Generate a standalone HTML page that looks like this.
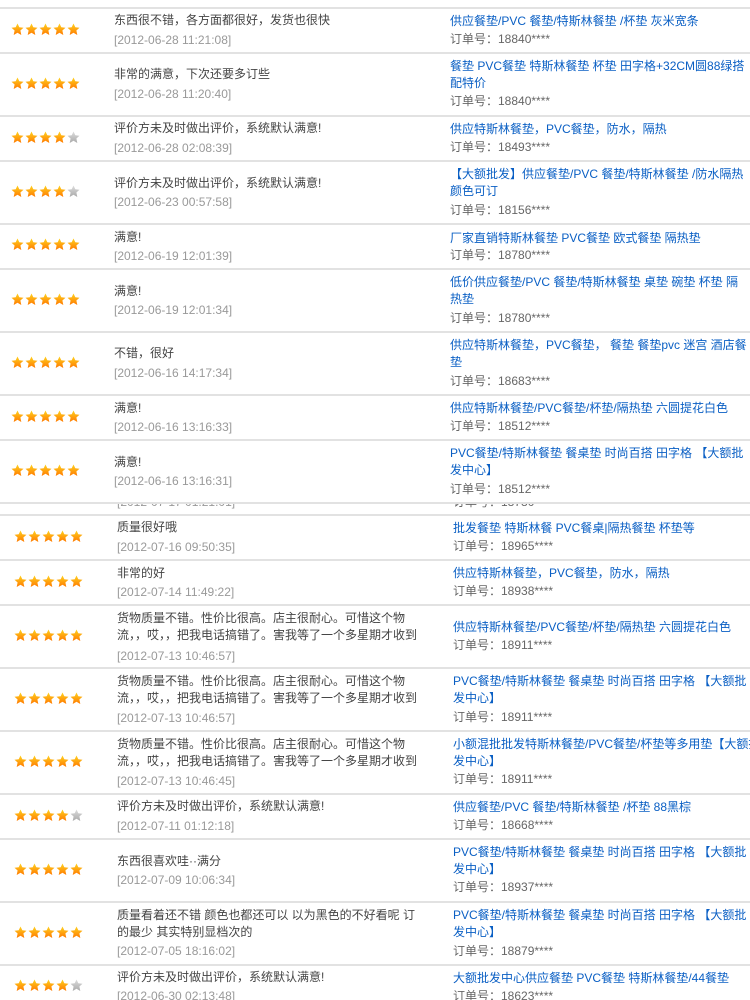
<!DOCTYPE html>
<html><head><meta charset="utf-8">
<style>
html,body{margin:0;padding:0;background:#fff;width:750px;height:1000px;overflow:hidden;position:relative;}
.t{position:absolute;font-family:"Liberation Sans","Noto Sans CJK SC",sans-serif;font-size:12px;line-height:16px;white-space:nowrap;}
.c{color:#444;}
.d{color:#999;}
.p{color:#0a5fc4;}
.o{color:#666;}
.l{position:absolute;left:0;width:750px;height:2px;background:#e2e2e2;}
.s{position:absolute;height:13px;}
</style></head><body>
<svg width="0" height="0" style="position:absolute">
<defs>
<linearGradient id="g" x1="0" y1="0" x2="0" y2="1"><stop offset="0" stop-color="#ffd21f"/><stop offset="1" stop-color="#ff7a00"/></linearGradient>
<linearGradient id="h" x1="0" y1="0" x2="0" y2="1"><stop offset="0" stop-color="#ddd"/><stop offset="1" stop-color="#aaa"/></linearGradient>
<symbol id="st" viewBox="0 0 13 13"><path d="M6.5 0.5 L8.3 4.3 L12.5 4.7 L9.4 7.5 L10.3 12 L6.5 9.8 L2.7 12 L3.6 7.5 L0.5 4.7 L4.7 4.3 Z"/></symbol>
</defs></svg>

<!-- lines top -->
<div class="l" style="top:7px"></div>
<div class="l" style="top:52px"></div>
<div class="l" style="top:115px"></div>
<div class="l" style="top:160px"></div>
<div class="l" style="top:223px"></div>
<div class="l" style="top:268px"></div>
<div class="l" style="top:331px"></div>
<div class="l" style="top:394px"></div>
<div class="l" style="top:439px"></div>
<div class="l" style="top:502px"></div>
<div class="l" style="top:514px"></div>
<div class="l" style="top:559px"></div>
<div class="l" style="top:604px"></div>
<div class="l" style="top:667px"></div>
<div class="l" style="top:730px"></div>
<div class="l" style="top:793px"></div>
<div class="l" style="top:838px"></div>
<div class="l" style="top:901px"></div>
<div class="l" style="top:964px"></div>

<!-- stars -->
<svg class="s" style="left:11px;top:23px" width="72" height="13"><use href="#st" x="0" width="13" height="13" fill="url(#g)"/><use href="#st" x="14" width="13" height="13" fill="url(#g)"/><use href="#st" x="28" width="13" height="13" fill="url(#g)"/><use href="#st" x="42" width="13" height="13" fill="url(#g)"/><use href="#st" x="56" width="13" height="13" fill="url(#g)"/></svg>
<svg class="s" style="left:11px;top:77px" width="72" height="13"><use href="#st" x="0" width="13" height="13" fill="url(#g)"/><use href="#st" x="14" width="13" height="13" fill="url(#g)"/><use href="#st" x="28" width="13" height="13" fill="url(#g)"/><use href="#st" x="42" width="13" height="13" fill="url(#g)"/><use href="#st" x="56" width="13" height="13" fill="url(#g)"/></svg>
<svg class="s" style="left:11px;top:131px" width="72" height="13"><use href="#st" x="0" width="13" height="13" fill="url(#g)"/><use href="#st" x="14" width="13" height="13" fill="url(#g)"/><use href="#st" x="28" width="13" height="13" fill="url(#g)"/><use href="#st" x="42" width="13" height="13" fill="url(#g)"/><use href="#st" x="56" width="13" height="13" fill="url(#h)"/></svg>
<svg class="s" style="left:11px;top:185px" width="72" height="13"><use href="#st" x="0" width="13" height="13" fill="url(#g)"/><use href="#st" x="14" width="13" height="13" fill="url(#g)"/><use href="#st" x="28" width="13" height="13" fill="url(#g)"/><use href="#st" x="42" width="13" height="13" fill="url(#g)"/><use href="#st" x="56" width="13" height="13" fill="url(#h)"/></svg>
<svg class="s" style="left:11px;top:238px" width="72" height="13"><use href="#st" x="0" width="13" height="13" fill="url(#g)"/><use href="#st" x="14" width="13" height="13" fill="url(#g)"/><use href="#st" x="28" width="13" height="13" fill="url(#g)"/><use href="#st" x="42" width="13" height="13" fill="url(#g)"/><use href="#st" x="56" width="13" height="13" fill="url(#g)"/></svg>
<svg class="s" style="left:11px;top:293px" width="72" height="13"><use href="#st" x="0" width="13" height="13" fill="url(#g)"/><use href="#st" x="14" width="13" height="13" fill="url(#g)"/><use href="#st" x="28" width="13" height="13" fill="url(#g)"/><use href="#st" x="42" width="13" height="13" fill="url(#g)"/><use href="#st" x="56" width="13" height="13" fill="url(#g)"/></svg>
<svg class="s" style="left:11px;top:356px" width="72" height="13"><use href="#st" x="0" width="13" height="13" fill="url(#g)"/><use href="#st" x="14" width="13" height="13" fill="url(#g)"/><use href="#st" x="28" width="13" height="13" fill="url(#g)"/><use href="#st" x="42" width="13" height="13" fill="url(#g)"/><use href="#st" x="56" width="13" height="13" fill="url(#g)"/></svg>
<svg class="s" style="left:11px;top:410px" width="72" height="13"><use href="#st" x="0" width="13" height="13" fill="url(#g)"/><use href="#st" x="14" width="13" height="13" fill="url(#g)"/><use href="#st" x="28" width="13" height="13" fill="url(#g)"/><use href="#st" x="42" width="13" height="13" fill="url(#g)"/><use href="#st" x="56" width="13" height="13" fill="url(#g)"/></svg>
<svg class="s" style="left:11px;top:464px" width="72" height="13"><use href="#st" x="0" width="13" height="13" fill="url(#g)"/><use href="#st" x="14" width="13" height="13" fill="url(#g)"/><use href="#st" x="28" width="13" height="13" fill="url(#g)"/><use href="#st" x="42" width="13" height="13" fill="url(#g)"/><use href="#st" x="56" width="13" height="13" fill="url(#g)"/></svg>

<svg class="s" style="left:14px;top:530px" width="72" height="13"><use href="#st" x="0" width="13" height="13" fill="url(#g)"/><use href="#st" x="14" width="13" height="13" fill="url(#g)"/><use href="#st" x="28" width="13" height="13" fill="url(#g)"/><use href="#st" x="42" width="13" height="13" fill="url(#g)"/><use href="#st" x="56" width="13" height="13" fill="url(#g)"/></svg>
<svg class="s" style="left:14px;top:575px" width="72" height="13"><use href="#st" x="0" width="13" height="13" fill="url(#g)"/><use href="#st" x="14" width="13" height="13" fill="url(#g)"/><use href="#st" x="28" width="13" height="13" fill="url(#g)"/><use href="#st" x="42" width="13" height="13" fill="url(#g)"/><use href="#st" x="56" width="13" height="13" fill="url(#g)"/></svg>
<svg class="s" style="left:14px;top:629px" width="72" height="13"><use href="#st" x="0" width="13" height="13" fill="url(#g)"/><use href="#st" x="14" width="13" height="13" fill="url(#g)"/><use href="#st" x="28" width="13" height="13" fill="url(#g)"/><use href="#st" x="42" width="13" height="13" fill="url(#g)"/><use href="#st" x="56" width="13" height="13" fill="url(#g)"/></svg>
<svg class="s" style="left:14px;top:692px" width="72" height="13"><use href="#st" x="0" width="13" height="13" fill="url(#g)"/><use href="#st" x="14" width="13" height="13" fill="url(#g)"/><use href="#st" x="28" width="13" height="13" fill="url(#g)"/><use href="#st" x="42" width="13" height="13" fill="url(#g)"/><use href="#st" x="56" width="13" height="13" fill="url(#g)"/></svg>
<svg class="s" style="left:14px;top:755px" width="72" height="13"><use href="#st" x="0" width="13" height="13" fill="url(#g)"/><use href="#st" x="14" width="13" height="13" fill="url(#g)"/><use href="#st" x="28" width="13" height="13" fill="url(#g)"/><use href="#st" x="42" width="13" height="13" fill="url(#g)"/><use href="#st" x="56" width="13" height="13" fill="url(#g)"/></svg>
<svg class="s" style="left:14px;top:809px" width="72" height="13"><use href="#st" x="0" width="13" height="13" fill="url(#g)"/><use href="#st" x="14" width="13" height="13" fill="url(#g)"/><use href="#st" x="28" width="13" height="13" fill="url(#g)"/><use href="#st" x="42" width="13" height="13" fill="url(#g)"/><use href="#st" x="56" width="13" height="13" fill="url(#h)"/></svg>
<svg class="s" style="left:14px;top:863px" width="72" height="13"><use href="#st" x="0" width="13" height="13" fill="url(#g)"/><use href="#st" x="14" width="13" height="13" fill="url(#g)"/><use href="#st" x="28" width="13" height="13" fill="url(#g)"/><use href="#st" x="42" width="13" height="13" fill="url(#g)"/><use href="#st" x="56" width="13" height="13" fill="url(#g)"/></svg>
<svg class="s" style="left:14px;top:926px" width="72" height="13"><use href="#st" x="0" width="13" height="13" fill="url(#g)"/><use href="#st" x="14" width="13" height="13" fill="url(#g)"/><use href="#st" x="28" width="13" height="13" fill="url(#g)"/><use href="#st" x="42" width="13" height="13" fill="url(#g)"/><use href="#st" x="56" width="13" height="13" fill="url(#g)"/></svg>
<svg class="s" style="left:14px;top:979px" width="72" height="13"><use href="#st" x="0" width="13" height="13" fill="url(#g)"/><use href="#st" x="14" width="13" height="13" fill="url(#g)"/><use href="#st" x="28" width="13" height="13" fill="url(#g)"/><use href="#st" x="42" width="13" height="13" fill="url(#g)"/><use href="#st" x="56" width="13" height="13" fill="url(#h)"/></svg>

<!-- top section text -->
<div class="t c" style="left:114px;top:12px">东西很不错，各方面都很好，发货也很快</div>
<div class="t d" style="left:114px;top:32px">[2012-06-28 11:21:08]</div>
<div class="t p" style="left:450px;top:13px">供应餐垫/PVC 餐垫/特斯林餐垫 /杯垫 灰米宽条</div>
<div class="t o" style="left:450px;top:31px">订单号：18840****</div>

<div class="t c" style="left:114px;top:66px">非常的满意，下次还要多订些</div>
<div class="t d" style="left:114px;top:86px">[2012-06-28 11:20:40]</div>
<div class="t p" style="left:450px;top:58px">餐垫 PVC餐垫 特斯林餐垫 杯垫 田字格+32CM圆88绿搭</div>
<div class="t p" style="left:450px;top:75px">配特价</div>
<div class="t o" style="left:450px;top:93px">订单号：18840****</div>

<div class="t c" style="left:114px;top:120px">评价方未及时做出评价，系统默认满意!</div>
<div class="t d" style="left:114px;top:140px">[2012-06-28 02:08:39]</div>
<div class="t p" style="left:450px;top:121px">供应特斯林餐垫，PVC餐垫，防水，隔热</div>
<div class="t o" style="left:450px;top:139px">订单号：18493****</div>

<div class="t c" style="left:114px;top:175px">评价方未及时做出评价，系统默认满意!</div>
<div class="t d" style="left:114px;top:194px">[2012-06-23 00:57:58]</div>
<div class="t p" style="left:450px;top:166px">【大额批发】供应餐垫/PVC 餐垫/特斯林餐垫 /防水隔热</div>
<div class="t p" style="left:450px;top:183px">颜色可订</div>
<div class="t o" style="left:450px;top:202px">订单号：18156****</div>

<div class="t c" style="left:114px;top:229px">满意!</div>
<div class="t d" style="left:114px;top:248px">[2012-06-19 12:01:39]</div>
<div class="t p" style="left:450px;top:230px">厂家直销特斯林餐垫 PVC餐垫 欧式餐垫 隔热垫</div>
<div class="t o" style="left:450px;top:247px">订单号：18780****</div>

<div class="t c" style="left:114px;top:283px">满意!</div>
<div class="t d" style="left:114px;top:302px">[2012-06-19 12:01:34]</div>
<div class="t p" style="left:450px;top:274px">低价供应餐垫/PVC 餐垫/特斯林餐垫 桌垫 碗垫 杯垫 隔</div>
<div class="t p" style="left:450px;top:291px">热垫</div>
<div class="t o" style="left:450px;top:310px">订单号：18780****</div>

<div class="t c" style="left:114px;top:345px">不错，很好</div>
<div class="t d" style="left:114px;top:365px">[2012-06-16 14:17:34]</div>
<div class="t p" style="left:450px;top:337px">供应特斯林餐垫，PVC餐垫， 餐垫 餐垫pvc 迷宫 酒店餐</div>
<div class="t p" style="left:450px;top:354px">垫</div>
<div class="t o" style="left:450px;top:373px">订单号：18683****</div>

<div class="t c" style="left:114px;top:400px">满意!</div>
<div class="t d" style="left:114px;top:419px">[2012-06-16 13:16:33]</div>
<div class="t p" style="left:450px;top:400px">供应特斯林餐垫/PVC餐垫/杯垫/隔热垫 六圆提花白色</div>
<div class="t o" style="left:450px;top:418px">订单号：18512****</div>

<div class="t c" style="left:114px;top:454px">满意!</div>
<div class="t d" style="left:114px;top:473px">[2012-06-16 13:16:31]</div>
<div class="t p" style="left:450px;top:445px">PVC餐垫/特斯林餐垫 餐桌垫 时尚百搭 田字格 【大额批</div>
<div class="t p" style="left:450px;top:462px">发中心】</div>
<div class="t o" style="left:450px;top:481px">订单号：18512****</div>

<!-- clipped strip -->
<div style="position:absolute;left:0;top:504px;width:750px;height:10px;overflow:hidden;">
<div class="t d" style="left:117px;top:-10px">[2012-07-17 01:21:01]</div>
<div class="t o" style="left:453px;top:-10px">订单号：18780****</div>
</div>

<!-- bottom section text -->
<div class="t c" style="left:117px;top:519px">质量很好哦</div>
<div class="t d" style="left:117px;top:539px">[2012-07-16 09:50:35]</div>
<div class="t p" style="left:453px;top:520px">批发餐垫 特斯林餐 PVC餐桌|隔热餐垫 杯垫等</div>
<div class="t o" style="left:453px;top:538px">订单号：18965****</div>

<div class="t c" style="left:117px;top:565px">非常的好</div>
<div class="t d" style="left:117px;top:584px">[2012-07-14 11:49:22]</div>
<div class="t p" style="left:453px;top:565px">供应特斯林餐垫，PVC餐垫，防水，隔热</div>
<div class="t o" style="left:453px;top:583px">订单号：18938****</div>

<div class="t c" style="left:117px;top:610px">货物质量不错。性价比很高。店主很耐心。可惜这个物</div>
<div class="t c" style="left:117px;top:627px">流，，哎，，把我电话搞错了。害我等了一个多星期才收到</div>
<div class="t d" style="left:117px;top:648px">[2012-07-13 10:46:57]</div>
<div class="t p" style="left:453px;top:619px">供应特斯林餐垫/PVC餐垫/杯垫/隔热垫 六圆提花白色</div>
<div class="t o" style="left:453px;top:637px">订单号：18911****</div>

<div class="t c" style="left:117px;top:673px">货物质量不错。性价比很高。店主很耐心。可惜这个物</div>
<div class="t c" style="left:117px;top:690px">流，，哎，，把我电话搞错了。害我等了一个多星期才收到</div>
<div class="t d" style="left:117px;top:710px">[2012-07-13 10:46:57]</div>
<div class="t p" style="left:453px;top:673px">PVC餐垫/特斯林餐垫 餐桌垫 时尚百搭 田字格 【大额批</div>
<div class="t p" style="left:453px;top:690px">发中心】</div>
<div class="t o" style="left:453px;top:709px">订单号：18911****</div>

<div class="t c" style="left:117px;top:736px">货物质量不错。性价比很高。店主很耐心。可惜这个物</div>
<div class="t c" style="left:117px;top:753px">流，，哎，，把我电话搞错了。害我等了一个多星期才收到</div>
<div class="t d" style="left:117px;top:773px">[2012-07-13 10:46:45]</div>
<div class="t p" style="left:453px;top:736px">小额混批批发特斯林餐垫/PVC餐垫/杯垫等多用垫【大额批</div>
<div class="t p" style="left:453px;top:753px">发中心】</div>
<div class="t o" style="left:453px;top:771px">订单号：18911****</div>

<div class="t c" style="left:117px;top:798px">评价方未及时做出评价，系统默认满意!</div>
<div class="t d" style="left:117px;top:818px">[2012-07-11 01:12:18]</div>
<div class="t p" style="left:453px;top:799px">供应餐垫/PVC 餐垫/特斯林餐垫 /杯垫 88黑棕</div>
<div class="t o" style="left:453px;top:817px">订单号：18668****</div>

<div class="t c" style="left:117px;top:853px">东西很喜欢哇··满分</div>
<div class="t d" style="left:117px;top:872px">[2012-07-09 10:06:34]</div>
<div class="t p" style="left:453px;top:844px">PVC餐垫/特斯林餐垫 餐桌垫 时尚百搭 田字格 【大额批</div>
<div class="t p" style="left:453px;top:861px">发中心】</div>
<div class="t o" style="left:453px;top:879px">订单号：18937****</div>

<div class="t c" style="left:117px;top:907px">质量看着还不错 颜色也都还可以 以为黑色的不好看呢 订</div>
<div class="t c" style="left:117px;top:924px">的最少 其实特别显档次的</div>
<div class="t d" style="left:117px;top:943px">[2012-07-05 18:16:02]</div>
<div class="t p" style="left:453px;top:907px">PVC餐垫/特斯林餐垫 餐桌垫 时尚百搭 田字格 【大额批</div>
<div class="t p" style="left:453px;top:924px">发中心】</div>
<div class="t o" style="left:453px;top:943px">订单号：18879****</div>

<div class="t c" style="left:117px;top:969px">评价方未及时做出评价，系统默认满意!</div>
<div class="t d" style="left:117px;top:988px">[2012-06-30 02:13:48]</div>
<div class="t p" style="left:453px;top:970px">大额批发中心供应餐垫 PVC餐垫 特斯林餐垫/44餐垫</div>
<div class="t o" style="left:453px;top:988px">订单号：18623****</div>
</body></html>
